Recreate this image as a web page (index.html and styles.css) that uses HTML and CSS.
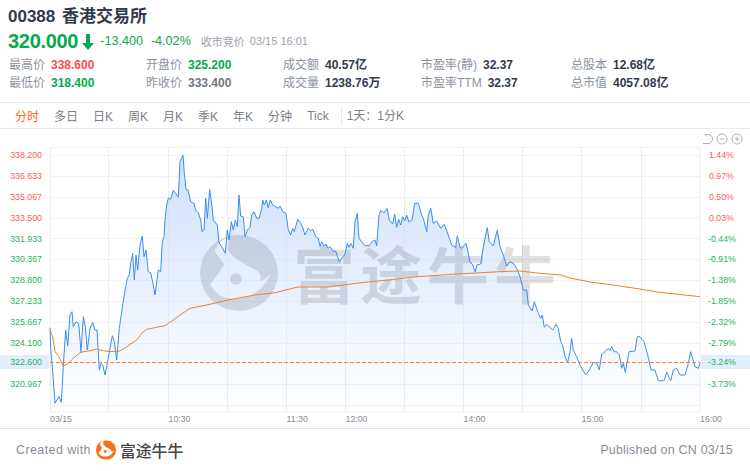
FILE: index.html
```html
<!DOCTYPE html>
<html lang="zh">
<head>
<meta charset="utf-8">
<title>00388 香港交易所</title>
<link rel="stylesheet" href="styles.css">
</head>
<body>
<svg class="defs" width="0" height="0" aria-hidden="true">
  <defs>
    <mask id="logo-mask" maskContentUnits="objectBoundingBox">
      <rect width="1" height="1" fill="#fff"/>
      <path transform="scale(.01)" fill="#000" d="M38 3C28 6 22 12 19 20C22 28 27 33 31 38C26 48 19 57 13 65C17 72 23 78 29 81C44 87 64 84 78 70C84 64 88 58 90 50C86 57 81 60 77 60C80 50 72 46 64 42C53 36 42 30 36 20C36 14 37 8 38 3Z"/>
      <circle cx=".46" cy=".58" r=".075" fill="#fff"/>
    </mask>
    <linearGradient id="area" gradientUnits="userSpaceOnUse" x1="0" y1="155" x2="0" y2="412">
      <stop offset="0" stop-color="#cfe1fb"/>
      <stop offset="1" stop-color="#cfe1fb" stop-opacity="0"/>
    </linearGradient>
  </defs>
</svg>

<header class="quote">
  <h1 class="title">00388 香港交易所</h1>
  <div class="price-row">
    <span class="price">320.000</span>
    <svg class="arrow" width="12" height="16" viewBox="0 0 12 16"><path d="M4 0H8V9H12L6 16L0 9H4Z"/></svg>
    <span class="change">-13.400</span>
    <span class="change">-4.02%</span>
    <span class="status">收市竞价</span>
    <span class="status-time">03/15 16:01</span>
  </div>
  <div class="stats">
    <div class="stat"><span class="label">最高价</span><span class="num up">338.600</span></div>
    <div class="stat"><span class="label">开盘价</span><span class="num down">325.200</span></div>
    <div class="stat"><span class="label">成交额</span><span class="num">40.57亿</span></div>
    <div class="stat"><span class="label">市盈率(静)</span><span class="num">32.37</span></div>
    <div class="stat"><span class="label">总股本</span><span class="num">12.68亿</span></div>
    <div class="stat"><span class="label">最低价</span><span class="num down">318.400</span></div>
    <div class="stat"><span class="label">昨收价</span><span class="num flat">333.400</span></div>
    <div class="stat"><span class="label">成交量</span><span class="num">1238.76万</span></div>
    <div class="stat"><span class="label">市盈率TTM</span><span class="num">32.37</span></div>
    <div class="stat"><span class="label">总市值</span><span class="num">4057.08亿</span></div>
  </div>
</header>

<nav class="tabs">
  <span class="tab active">分时</span>
  <span class="tab">多日</span>
  <span class="tab">日K</span>
  <span class="tab">周K</span>
  <span class="tab">月K</span>
  <span class="tab">季K</span>
  <span class="tab">年K</span>
  <span class="tab">分钟</span>
  <span class="tab">Tick</span>
  <span class="tab range">1天：1分K</span>
</nav>

<svg class="chart" width="750" height="299" viewBox="0 129 750 299">
  <g class="tools">
    <path d="M705 134.500H708C710.800 134.500 712.500 136.500 712.500 139C712.500 141.500 710.800 143.500 708 143.500H703M705 134.500L706.500 136.500"/>
    <circle cx="722" cy="139" r="5"/><path d="M719.500 139H724.500"/>
    <circle cx="737" cy="139" r="5"/><path d="M734.500 139H739.500M737 136.500V141.500"/>
  </g>
  <rect class="hl" x="0" y="355" width="49" height="14"/>
  <rect class="hl" x="701" y="355" width="49" height="14"/>

  <path class="grid-h" d="M50 147.500H700M50 155.500H700M50 176.500H700M50 197.500H700M50 218H700M50 238.500H700M50 259.500H700M50 280.500H700M50 301.500H700M50 322.500H700M50 343.500H700M50 384.500H700M50 405.500H700M50 412H700"/>
  <path class="grid-v" d="M50.500 147V412M108.500 147V412M168.500 147V412M227.500 147V412M286.500 147V412M345.500 147V412M404.500 147V412M463.500 147V412M522.500 147V412M581.500 147V412M641.500 147V412M700 147V412"/>

  <polygon class="area" points="50,412 50,327.700 50.700,348.300 52.700,371.700 55,403.300 56.700,400 59,396.700 61.300,402.300 62.700,378.300 63.300,365 65.700,330 67.700,346 70,315 72,311.700 73.300,326.700 76,321.700 78.700,323.300 81,351.700 83.300,316.700 85.300,326.700 87.300,350 90,328.300 92.700,322.300 95,330 97,330 99.300,370 101,363.300 102.700,365 105,375 107.300,363.300 110,348.300 112.300,335.700 114.300,341.700 116.700,360 119.300,328.300 122.700,305 126,285 127.300,278.300 129.300,275 130.700,263.300 132.700,253.300 134.300,280 136,255 137.700,270 140,245 142.300,236 144,256.700 146,250 148.300,271.700 150.700,272.700 153.300,285 155,295 158.300,270 160.700,271.700 162.300,241.700 164,236.700 165,220 166.700,205 168.300,198.300 170.700,199.300 173.300,190 175.700,193.300 178.300,197.300 180,161.700 183,155 184.300,173.300 186,189.300 188,190 190.700,201.700 194,203.300 195.700,210.700 198.300,212.700 200.700,220 202,231.700 204,230 205.700,198.300 207.300,218.300 209.700,189.300 212,206.700 213.300,220 217.300,225 219,242.700 221.700,246.700 225.300,253.300 227.300,230 229,240 231.300,221.700 233.300,230 235.300,220 237.300,226.700 239,195 240.700,216 243.300,216.700 245,236.700 247.300,230 250,227.300 251.700,215 254,211.700 256.700,218.300 259.300,218.300 261.700,208.300 262.700,200 264.300,205 266.300,200 268.300,207.700 270.300,200 272.700,205 278.300,208.300 280,206 282.700,211.700 286,213.300 288.300,230 290.700,235 292.700,228.300 294.300,231.700 297.700,219.300 300.700,223.300 302.700,227.300 305,235 308.300,228.300 310.700,230.700 312.700,229.300 315.700,236.700 318.300,238.300 320,246 321.700,241.700 324,246 326,244 328,248.300 330,246.700 332.700,250.700 336,251.700 339.300,261.700 345,254 347.300,243.300 349,247.300 350.700,243.300 353.300,248.300 355,221.700 357.300,213.300 359,238.300 361.700,241.700 365,245.700 369.300,245.700 372.700,241 375,240 376.700,246 379,215 380.700,210.700 384.300,212.700 387,208.300 389.300,220 392.700,224 394.700,214 396.700,227.300 398.700,219.300 400.700,225 402.700,216.700 404.700,221 406.700,215 408.700,221.700 412,220 414.700,203.300 418.300,203.300 421.700,215 423.300,218.300 426.700,231.700 428.300,215 430.700,208.300 433.300,223.300 436.700,221 440.700,228.300 444.300,224.300 448.300,235 451.700,245 455.700,247.700 457.300,235.700 460,247.300 462,248.300 466,243.300 468.300,253.300 470,261.700 472.700,265 475.300,272.300 476.700,265 480.700,264 483.300,246.700 487.300,227.700 489.300,241.700 493.300,246 497.300,230 500,246.700 503.300,255 506.700,266 510,261.700 513.300,263.300 516.700,268.300 520,276.700 523.300,290 526.700,290 528.300,305 532.300,311 534.300,301.700 538.300,313.300 540.700,318.300 542.300,315 544.300,327.300 546.700,324.300 552.700,330 556,324.300 558.300,328.300 560.700,341.700 562.300,344.300 565,356.700 567.700,362.300 570,351.700 571.700,338.300 573.300,350 576.700,356.700 580,365 585.700,375 589.300,370 593.300,362.300 596.700,363.300 599.300,370 601.700,354.300 605,351.700 608.300,348.300 610,350.700 611.700,346.700 614,351.700 616.700,351.700 619.300,355 621.700,368.300 623.300,363.300 625.300,372.300 629,351.700 635,351 637.300,336.700 640,336.700 644,341.700 647.300,353.300 650,365 651,370 655,370 658.300,380.700 664,380.700 666.700,372.300 670.700,380.700 673.300,370 676.700,368.300 680,375 685,375 688.300,363.300 690.700,351.700 695,366.700 698.300,368.300 700,363.300 700,412"/>

  <g class="watermark">
    <rect x="200" y="235" width="78" height="76" mask="url(#logo-mask)" rx="39"/>
    <text class="wm-text" x="293" y="299">富途牛牛</text>
  </g>

  <polyline class="price-line" points="50,327.700 50.700,348.300 52.700,371.700 55,403.300 56.700,400 59,396.700 61.300,402.300 62.700,378.300 63.300,365 65.700,330 67.700,346 70,315 72,311.700 73.300,326.700 76,321.700 78.700,323.300 81,351.700 83.300,316.700 85.300,326.700 87.300,350 90,328.300 92.700,322.300 95,330 97,330 99.300,370 101,363.300 102.700,365 105,375 107.300,363.300 110,348.300 112.300,335.700 114.300,341.700 116.700,360 119.300,328.300 122.700,305 126,285 127.300,278.300 129.300,275 130.700,263.300 132.700,253.300 134.300,280 136,255 137.700,270 140,245 142.300,236 144,256.700 146,250 148.300,271.700 150.700,272.700 153.300,285 155,295 158.300,270 160.700,271.700 162.300,241.700 164,236.700 165,220 166.700,205 168.300,198.300 170.700,199.300 173.300,190 175.700,193.300 178.300,197.300 180,161.700 183,155 184.300,173.300 186,189.300 188,190 190.700,201.700 194,203.300 195.700,210.700 198.300,212.700 200.700,220 202,231.700 204,230 205.700,198.300 207.300,218.300 209.700,189.300 212,206.700 213.300,220 217.300,225 219,242.700 221.700,246.700 225.300,253.300 227.300,230 229,240 231.300,221.700 233.300,230 235.300,220 237.300,226.700 239,195 240.700,216 243.300,216.700 245,236.700 247.300,230 250,227.300 251.700,215 254,211.700 256.700,218.300 259.300,218.300 261.700,208.300 262.700,200 264.300,205 266.300,200 268.300,207.700 270.300,200 272.700,205 278.300,208.300 280,206 282.700,211.700 286,213.300 288.300,230 290.700,235 292.700,228.300 294.300,231.700 297.700,219.300 300.700,223.300 302.700,227.300 305,235 308.300,228.300 310.700,230.700 312.700,229.300 315.700,236.700 318.300,238.300 320,246 321.700,241.700 324,246 326,244 328,248.300 330,246.700 332.700,250.700 336,251.700 339.300,261.700 345,254 347.300,243.300 349,247.300 350.700,243.300 353.300,248.300 355,221.700 357.300,213.300 359,238.300 361.700,241.700 365,245.700 369.300,245.700 372.700,241 375,240 376.700,246 379,215 380.700,210.700 384.300,212.700 387,208.300 389.300,220 392.700,224 394.700,214 396.700,227.300 398.700,219.300 400.700,225 402.700,216.700 404.700,221 406.700,215 408.700,221.700 412,220 414.700,203.300 418.300,203.300 421.700,215 423.300,218.300 426.700,231.700 428.300,215 430.700,208.300 433.300,223.300 436.700,221 440.700,228.300 444.300,224.300 448.300,235 451.700,245 455.700,247.700 457.300,235.700 460,247.300 462,248.300 466,243.300 468.300,253.300 470,261.700 472.700,265 475.300,272.300 476.700,265 480.700,264 483.300,246.700 487.300,227.700 489.300,241.700 493.300,246 497.300,230 500,246.700 503.300,255 506.700,266 510,261.700 513.300,263.300 516.700,268.300 520,276.700 523.300,290 526.700,290 528.300,305 532.300,311 534.300,301.700 538.300,313.300 540.700,318.300 542.300,315 544.300,327.300 546.700,324.300 552.700,330 556,324.300 558.300,328.300 560.700,341.700 562.300,344.300 565,356.700 567.700,362.300 570,351.700 571.700,338.300 573.300,350 576.700,356.700 580,365 585.700,375 589.300,370 593.300,362.300 596.700,363.300 599.300,370 601.700,354.300 605,351.700 608.300,348.300 610,350.700 611.700,346.700 614,351.700 616.700,351.700 619.300,355 621.700,368.300 623.300,363.300 625.300,372.300 629,351.700 635,351 637.300,336.700 640,336.700 644,341.700 647.300,353.300 650,365 651,370 655,370 658.300,380.700 664,380.700 666.700,372.300 670.700,380.700 673.300,370 676.700,368.300 680,375 685,375 688.300,363.300 690.700,351.700 695,366.700 698.300,368.300 700,363.300"/>
  <path class="base-line" d="M50 362.500H700"/>
  <polyline class="avg-line" points="50,330 52.700,336.700 55,351.700 59,356.700 63.300,366 68.300,363.300 74,357.700 80,352.700 83.300,351.700 90,350.700 96.700,349 103.300,350.700 110,351.700 120,351 126.700,346.700 136.700,340 141.700,333.300 146.700,329.300 156.700,327.300 165,325.700 173.300,320 180,315 190,308.300 206.700,305 228,300 255,295 275,292.700 298,287 328,287 358,283 388,280 417,276.700 457,274 500,271.700 520,271 537,273 560,275 570,278 590,282 613,285 640,289 657,292 700,296.700"/>

  <g class="y-up">
    <text x="42" y="158">338.200</text><text x="42" y="179">336.633</text><text x="42" y="200">335.067</text><text x="42" y="221">333.500</text>
    <text x="709" y="158" class="pct">1.44%</text><text x="709" y="179" class="pct">0.97%</text><text x="709" y="200" class="pct">0.50%</text><text x="709" y="221" class="pct">0.03%</text>
  </g>
  <g class="y-down">
    <text x="42" y="242">331.933</text><text x="42" y="262">330.367</text><text x="42" y="283">328.800</text><text x="42" y="304">327.233</text><text x="42" y="325">325.667</text><text x="42" y="346">324.100</text><text x="42" y="365">322.600</text><text x="42" y="387">320.967</text>
    <text x="708" y="242" class="pct">-0.44%</text><text x="708" y="262" class="pct">-0.91%</text><text x="708" y="283" class="pct">-1.38%</text><text x="708" y="304" class="pct">-1.85%</text><text x="708" y="325" class="pct">-2.32%</text><text x="708" y="346" class="pct">-2.79%</text><text x="708" y="365" class="pct">-3.24%</text><text x="708" y="387" class="pct">-3.73%</text>
  </g>
  <g class="x-axis">
    <text x="50" y="422">03/15</text><text x="168.500" y="422">10:30</text><text x="286.500" y="422">11:30</text><text x="345.500" y="422">12:00</text><text x="463.500" y="422">14:00</text><text x="581.500" y="422">15:00</text><text x="700" y="422">16:00</text>
  </g>
</svg>

<footer class="footer">
  <div class="brand">
    <span class="created">Created with</span>
    <svg class="logo" width="20" height="22" viewBox="0 0 78 76"><rect width="78" height="76" rx="38" mask="url(#logo-mask)"/></svg>
    <span class="brand-name">富途牛牛</span>
  </div>
  <span class="published">Published on CN 03/15</span>
</footer>
</body>
</html>
```

FILE: styles.css
```css
* { box-sizing: border-box; }
html, body { margin: 0; padding: 0; background: #fff; }
body {
  width: 750px;
  height: 471px;
  overflow: hidden;
  font-family: "Liberation Sans", "Noto Sans CJK SC", sans-serif;
  color: #333c4d;
}
.defs { position: absolute; }

.quote { padding: 6px 0 9px 8px; height: 102px; }
.title { margin: 0; font-size: 17px; line-height: 22px; font-weight: 700; color: #333a47; word-spacing: 2px; }

.price-row { display: flex; align-items: center; height: 24px; margin-top: 1px; color: #06a94d; }
.price { font-size: 20px; font-weight: 700; letter-spacing: -.3px; }
.arrow { fill: #06a94d; margin-left: 4px; margin-top: 1px; }
.change { font-size: 12.600px; margin-left: 6px; }
.change + .change { margin-left: 8px; }
.status { font-size: 11px; color: #9aa1ad; margin-left: 10px; }
.status-time { font-size: 11px; color: #9aa1ad; margin-left: 5px; }

.stats {
  display: grid;
  grid-template-columns: 137px 137px 138px 150px 1fr;
  grid-auto-rows: 18px;
  padding-left: 1px;
  margin-top: 3px;
  font-size: 12px;
  line-height: 18px;
}
.stat { display: flex; gap: 6px; white-space: nowrap; }
.label { color: #8a92a0; }
.num { font-weight: 700; color: #333c4d; }
.num.up { color: #ff4c4c; }
.num.down { color: #06a94d; }
.num.flat { color: #6f7581; }

.tabs {
  display: flex;
  align-items: center;
  height: 27px;
  padding-left: 15px;
  gap: 15px;
  border-top: 1px solid #e6eaf2;
  border-bottom: 1px solid #e6eaf2;
  font-size: 12px;
  color: #7b808a;
}
.tab { white-space: nowrap; }
.tab.active { color: #ff6a20; }
.tab.range { border-left: 1px solid #e2e5ea; padding-left: 5px; margin-left: -3px; line-height: 20px; }

.chart { display: block; }
.chart text { font-size: 8.800px; font-family: "Liberation Sans", sans-serif; }
.tools { fill: none; stroke: #adb1b8; stroke-width: 1; }
.hl { fill: #e1effc; }
.grid-h { fill: none; stroke: #eef1f6; stroke-width: 1; }
.grid-v { fill: none; stroke: #e9edf4; stroke-width: 1; }
.area { fill: url(#area); }
.watermark rect { fill: #5c6670; fill-opacity: .2; }
.chart .wm-text {
  font-family: "Noto Sans CJK SC", sans-serif;
  font-size: 62px;
  font-weight: 700;
  letter-spacing: 5px;
  fill: #5c6670;
  fill-opacity: .2;
}
.price-line { fill: none; stroke: #3b8ef3; stroke-width: 1; stroke-linejoin: round; }
.avg-line { fill: none; stroke: #f08030; stroke-width: 1; }
.base-line { fill: none; stroke: #ef8a3e; stroke-width: 1; stroke-dasharray: 4 2; }
.y-up text { fill: #ff5a5a; text-anchor: end; }
.y-down text { fill: #1fb365; text-anchor: end; }
.chart .pct { text-anchor: start; }
.x-axis text { fill: #888d96; }

.footer {
  display: flex;
  justify-content: space-between;
  align-items: center;
  height: 43px;
  padding: 0 17px 0 16px;
  border-top: 1px solid #e3e5ea;
  color: #888d97;
  font-size: 12.500px;
  letter-spacing: .4px;
}
.brand { display: flex; align-items: center; }
.logo { fill: #f4721e; margin-left: 5px; }
.brand-name { font-family: "Noto Sans CJK SC", sans-serif; font-size: 15.800px; font-weight: 500; color: #444; margin-left: 4px; letter-spacing: 0; }
.published { letter-spacing: .2px; }
```
